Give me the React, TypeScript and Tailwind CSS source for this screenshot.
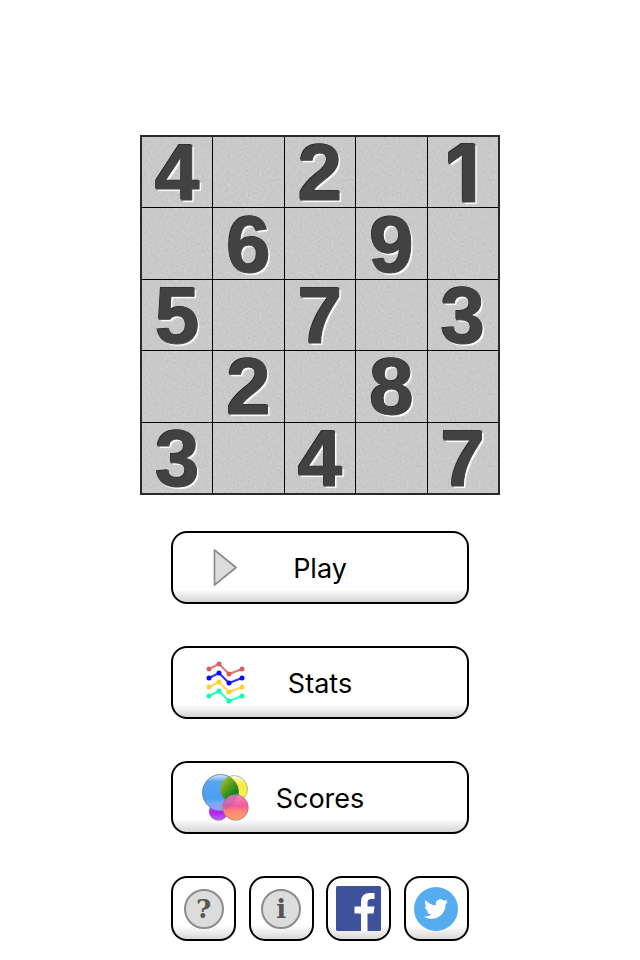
import type { ReactNode } from "react";
import clsx from "clsx";
import { FaTwitter } from "react-icons/fa";

const board = [
  [4, null, 2, null, 1],
  [null, 6, null, 9, null],
  [5, null, 7, null, 3],
  [null, 2, null, 8, null],
  [3, null, 4, null, 7],
];

const PlayIcon = () => (
  <svg width="24" height="38" viewBox="0 0 24 38" aria-hidden="true">
    <path d="M1.5 1 L23 18.5 L1.5 36 Z" fill="#dcdcdc" stroke="#8c8c8c" strokeWidth="1.7" strokeLinejoin="round" />
  </svg>
);

const StatsIcon = () => {
  const series = ["#d75f5f", "#0a0aff", "#ffd22e", "#0cffb0"];
  const points = [
    [4, 8],
    [14, 3],
    [24, 13],
    [37, 8],
  ];

  return (
    <svg width="40" height="44" viewBox="0 0 40 44" aria-hidden="true">
      {series.map((color, i) => (
        <g key={color} transform={`translate(0 ${i * 9})`} fill={color}>
          <polyline points={points.join(" ")} fill="none" stroke={color} strokeWidth="2" strokeOpacity="0.85" />
          {points.map(([x, y]) => (
            <circle key={x} cx={x} cy={y} r="2.5" />
          ))}
        </g>
      ))}
    </svg>
  );
};

const ScoresIcon = () => (
  <svg width="50" height="50" viewBox="0 0 50 50" aria-hidden="true">
    <defs>
      <linearGradient id="yellow" x1="0" y1="0" x2="0" y2="1">
        <stop offset="0" stopColor="#fffef0" />
        <stop offset="0.3" stopColor="#f6ec45" />
        <stop offset="1" stopColor="#fff44a" />
      </linearGradient>
      <linearGradient id="blue" x1="0" y1="0" x2="0" y2="1">
        <stop offset="0" stopColor="#d8ebfb" />
        <stop offset="0.2" stopColor="#58a5ee" />
        <stop offset="0.65" stopColor="#4a9ff0" />
        <stop offset="1" stopColor="#8cc8f8" />
      </linearGradient>
      <linearGradient id="green" x1="0" y1="0" x2="1" y2="1">
        <stop offset="0" stopColor="#b8cf30" />
        <stop offset="0.35" stopColor="#5f9d1c" />
        <stop offset="0.6" stopColor="#0b8420" />
        <stop offset="1" stopColor="#a6dcb0" />
      </linearGradient>
      <linearGradient id="purple" x1="0" y1="0" x2="0" y2="1">
        <stop offset="0" stopColor="#d9c8fa" />
        <stop offset="0.35" stopColor="#8c63ee" />
        <stop offset="0.55" stopColor="#b51af0" />
        <stop offset="1" stopColor="#b766f2" />
      </linearGradient>
      <linearGradient id="pink" x1="0" y1="0" x2="0" y2="1">
        <stop offset="0" stopColor="#f58ab8" />
        <stop offset="0.45" stopColor="#f4599c" />
        <stop offset="0.6" stopColor="#fb7f78" />
        <stop offset="1" stopColor="#ffa26c" />
      </linearGradient>
      <clipPath id="blueClip">
        <circle cx="20.5" cy="19.5" r="18" />
      </clipPath>
    </defs>
    <circle cx="34" cy="16" r="13.5" fill="url(#yellow)" stroke="#999" strokeWidth="0.7" />
    <circle cx="18.5" cy="38" r="9.5" fill="url(#purple)" stroke="#888" strokeWidth="0.5" />
    <circle cx="20.5" cy="19.5" r="18" fill="url(#blue)" stroke="#5c7890" strokeWidth="0.8" />
    <g clipPath="url(#blueClip)">
      <circle cx="34" cy="16" r="13.5" fill="url(#green)" />
      <circle cx="18.5" cy="38" r="9.5" fill="#8fa0f2" />
    </g>
    <circle cx="35.5" cy="34.5" r="12.8" fill="url(#pink)" stroke="#a07a80" strokeWidth="0.7" />
    <path d="M23 31.5 A12.8 12.8 0 0 1 38 22 Q36 32 25 37 Z" fill="#b865ae" opacity="0.55" />
  </svg>
);

const FacebookIcon = () => (
  <svg width="45" height="45" viewBox="0 0 45 45" aria-hidden="true">
    <rect width="45" height="45" rx="1.5" fill="#3e529c" />
    <path
      d="M25 45 V27.5 H18.5 V20.5 H25 V16 Q25 7 34 7 H38.5 V13 H35 Q31.5 13 31.5 16.5 V20.5 H38.5 L37.5 27.5 H31.5 V45 Z"
      fill="#fff"
    />
  </svg>
);

const TwitterIcon = () => (
  <span className="flex size-11 items-center justify-center rounded-full bg-[#55acee]">
    <FaTwitter className="size-6 text-white" aria-hidden="true" />
  </span>
);

const Glyph = ({ children }: { children: string }) => (
  <span className="flex size-10 items-center justify-center rounded-full border-2 border-[#8c8c8c] bg-[#dcdcdc] font-['DejaVu_Serif',serif] text-[26px] leading-none font-bold text-[#555]">
    {children}
  </span>
);

const MenuButton = ({ icon, label }: { icon: ReactNode; label: string }) => (
  <button
    type="button"
    className="grid h-[73px] w-full grid-cols-[72px_1fr_72px] items-center rounded-2xl border-2 border-black bg-linear-to-b from-white from-82% to-[#d4d4d4] px-4 text-[27px] text-black"
  >
    <span className="flex justify-center">{icon}</span>
    <span className="pt-1 text-center">{label}</span>
  </button>
);

const SmallButton = ({ label, children }: { label: string; children: ReactNode }) => (
  <button
    type="button"
    aria-label={label}
    className="flex size-[65px] items-center justify-center rounded-2xl border-2 border-black bg-linear-to-b from-white from-78% to-[#d8d8d8]"
  >
    {children}
  </button>
);

// Paper grain laid over the board cells, below the digits
const Grain = () => (
  <svg className="absolute inset-0 size-full" aria-hidden="true">
    <filter id="grain" x="0" y="0" width="1" height="1">
      <feTurbulence type="fractalNoise" baseFrequency="0.45" numOctaves="3" seed="4" />
      <feColorMatrix values="0.3 0.3 0 0 0.36  0.3 0.3 0 0 0.36  0.3 0.3 0 0 0.36  0 0 0 0 1" />
    </filter>
    <rect width="100%" height="100%" filter="url(#grain)" opacity="0.35" />
  </svg>
);

const Board = () => (
  <div className="grid w-full grid-cols-5 gap-px border-2 border-[#2a2a2a] bg-black">
    {board.flat().map((digit, i) => (
      <div key={i} className="relative flex aspect-square items-center justify-center bg-[#c4c4c4] pt-0.5">
        <Grain />
        <span
          className={clsx(
            "relative text-[80px] leading-[68px] font-bold text-[#424242] [-webkit-text-stroke:1px_#424242] [text-shadow:-1px_-1px_0_#222,2px_2px_1px_#fff]",
            // Inter draws the 1 without a foot
            digit === 1 ? "font-['Inter',sans-serif]" : "font-['Liberation_Sans',sans-serif]",
          )}
        >
          {digit}
        </span>
      </div>
    ))}
  </div>
);

export default function App() {
  return (
    <main className="flex min-h-screen flex-col items-center bg-white px-4 pt-[135px] pb-[18px] font-['Inter',sans-serif]">
      <div className="w-full max-w-[360px]">
        <Board />
      </div>
      <nav className="mt-9 flex w-full max-w-[298px] flex-col gap-[42px]">
        <MenuButton icon={<PlayIcon />} label="Play" />
        <MenuButton icon={<StatsIcon />} label="Stats" />
        <MenuButton icon={<ScoresIcon />} label="Scores" />
        <div className="flex justify-between">
          <SmallButton label="Help">
            <Glyph>?</Glyph>
          </SmallButton>
          <SmallButton label="Info">
            <Glyph>i</Glyph>
          </SmallButton>
          <SmallButton label="Facebook">
            <FacebookIcon />
          </SmallButton>
          <SmallButton label="Twitter">
            <TwitterIcon />
          </SmallButton>
        </div>
      </nav>
    </main>
  );
}
